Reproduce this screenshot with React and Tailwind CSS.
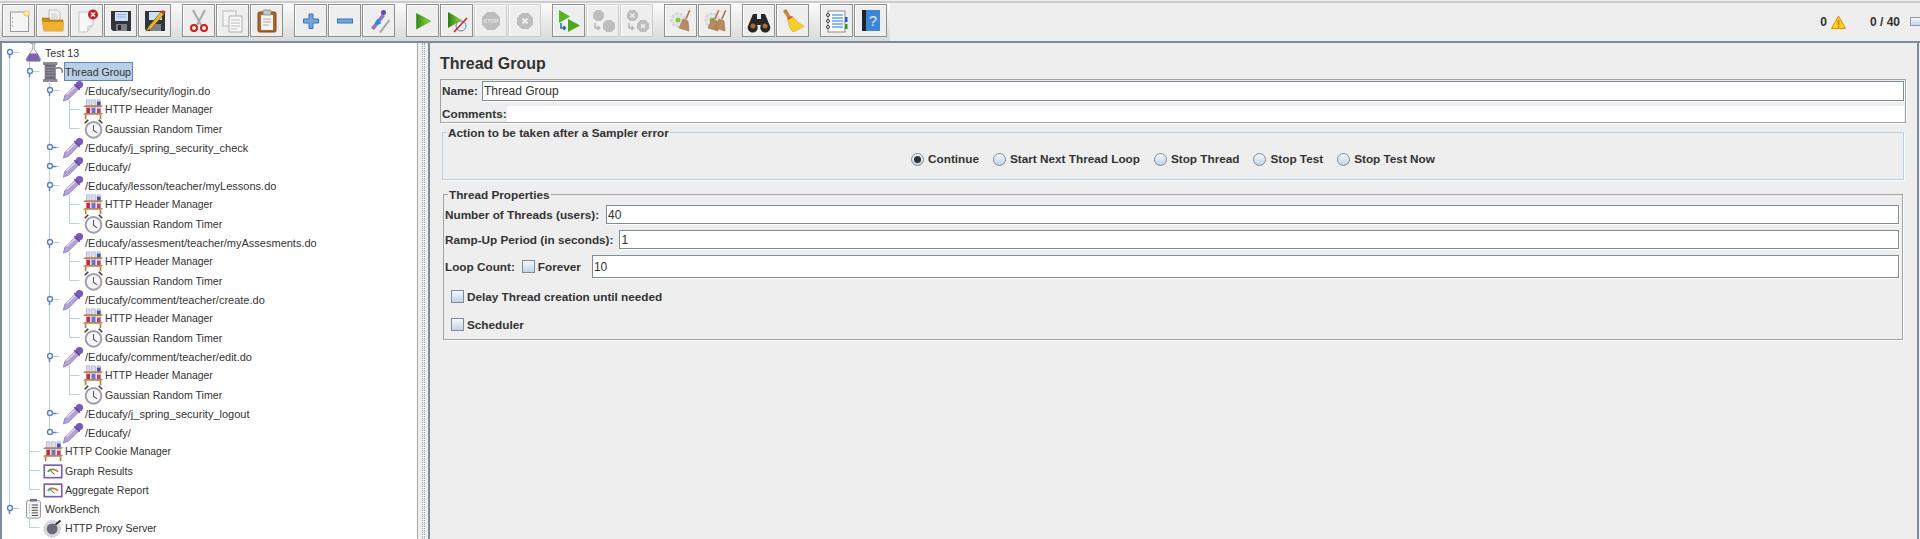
import React from "react";

// Toolbar icons, all drawn on a 24x24 box
const Svg = ({ size = 24, children, className = "" }) => (
  <svg width={size} height={size} viewBox="0 0 24 24" className={`shrink-0 ${className}`}>
    {children}
  </svg>
);

const NewIcon = () => (
  <Svg>
    <rect x="3.5" y="3" width="18" height="19.5" fill="#f5f5f5" stroke="#9a9a9a" />
    <circle cx="5.5" cy="9" r=".7" fill="#999" />
    <circle cx="5.5" cy="13" r=".7" fill="#999" />
    <circle cx="5.5" cy="17" r=".7" fill="#999" />
    <circle cx="19.5" cy="4.5" r="2.6" fill="#fff3b0" stroke="#e8c83a" />
  </Svg>
);
const OpenIcon = () => (
  <Svg>
    <path d="M8 1h8l3 3v10H8z" fill="#f4f4f4" stroke="#a0a0a0" strokeWidth=".7" />
    <path d="M10 5h6M10 7h7M10 9h7" stroke="#b5b5b5" strokeWidth=".7" />
    <path d="M1 9h7l1 2h13v11H3z" fill="#c98a1a" stroke="#a87412" strokeWidth=".6" />
    <path d="M1 13h22l-1 9H3z" fill="#f0b030" />
  </Svg>
);
const CloseIcon = () => (
  <Svg>
    <path d="M4 3h14v13l-6 7H4z" fill="#f7f7f7" stroke="#c4c4c4" />
    <path d="M12 23l1-6 5-1z" fill="#e2e2e2" stroke="#bbb" strokeWidth=".5" />
    <circle cx="18" cy="5.5" r="5" fill="#c91f1f" />
    <path d="M16 3.5l4 4M20 3.5l-4 4" stroke="#fff" strokeWidth="1.4" />
  </Svg>
);
const SaveIcon = () => (
  <Svg>
    <path d="M2 2h20v20H4l-2-2z" fill="#30343b" />
    <rect x="6" y="3" width="13" height="9" fill="#cfe0f4" />
    <path d="M8 5.5h9M8 8h9" stroke="#8fb2dc" />
    <rect x="7" y="15" width="11" height="7" fill="#7b8087" />
    <rect x="9" y="16" width="3" height="5" fill="#26292e" />
  </Svg>
);
const SaveAsIcon = () => (
  <Svg>
    <path d="M2 2h20v20H4l-2-2z" fill="#30343b" />
    <rect x="6" y="3" width="13" height="8" fill="#cfe0f4" />
    <rect x="7" y="15" width="11" height="7" fill="#7b8087" />
    <path d="M3 22l3-5L18 3l3 2L8 20z" fill="#e8b62a" stroke="#6b4b10" strokeWidth=".6" />
    <path d="M18 3l2-2 3 2-2 2z" fill="#d12f2f" />
  </Svg>
);
const CutIcon = () => (
  <Svg>
    <path d="M6 1l8 15M18 1l-8 15" stroke="#a8a8a8" strokeWidth="2" />
    <circle cx="7" cy="19" r="3" fill="none" stroke="#cf1d1d" strokeWidth="2" />
    <circle cx="17" cy="19" r="3" fill="none" stroke="#cf1d1d" strokeWidth="2" />
  </Svg>
);
const CopyIcon = () => (
  <Svg>
    <rect x="2" y="2" width="13" height="15" fill="#f4f4f4" stroke="#b9b9b9" />
    <path d="M8 7h13v16H8z" fill="#f8f8f8" stroke="#adadad" />
    <path d="M10 11h9M10 14h9M10 17h9M10 20h6" stroke="#bdbdbd" />
  </Svg>
);
const PasteIcon = () => (
  <Svg>
    <rect x="3" y="3" width="18" height="20" rx="1.5" fill="#a9682a" stroke="#7a4716" />
    <rect x="6" y="6" width="12" height="15" fill="#f4f4f4" />
    <rect x="8" y="1" width="8" height="5" rx="1" fill="#c5c5c5" stroke="#777" strokeWidth=".7" />
    <path d="M8 10h8M8 13h8M8 16h6" stroke="#aaa" />
  </Svg>
);
const PlusIcon = () => (
  <Svg>
    <path d="M10 5h4v5h5.500v4H14v5.500h-4V14H4.500v-4H10z" fill="#74a5dc" stroke="#3d72b3" />
  </Svg>
);
const MinusIcon = () => (
  <Svg>
    <rect x="4.500" y="10" width="15" height="4" fill="#74a5dc" stroke="#3d72b3" />
  </Svg>
);
const ToggleIcon = () => (
  <Svg>
    <path d="M4 19L15 5l3 2L7 21z" fill="#8f74c4" />
    <circle cx="16.500" cy="3.500" r="2.500" fill="#6b46b5" />
    <path d="M12 23l10-13 1 2-9 12z" fill="#a9a9a9" />
    <circle cx="11" cy="13" r="2.500" fill="#3c9ae0" />
    <path d="M8 14h6M11 10v6" stroke="#2a7fc4" />
  </Svg>
);
const RunIcon = () => (
  <Svg>
    <defs>
      <linearGradient id="runFill" x1="0" x2="1" y1="0" y2="0">
        <stop offset="0" stopColor="#2f8a14" />
        <stop offset="1" stopColor="#9fdc3c" />
      </linearGradient>
    </defs>
    <path d="M5.500 4.500L19.500 12 5.500 20z" fill="url(#runFill)" stroke="#3d8c1e" strokeWidth=".6" />
  </Svg>
);
const RunNoPauseIcon = () => (
  <Svg>
    <defs>
      <linearGradient id="runFill2" x1="0" x2="1" y1="0" y2="0">
        <stop offset="0" stopColor="#2f7a14" />
        <stop offset="1" stopColor="#9fdc3c" />
      </linearGradient>
    </defs>
    <path d="M3 3L17 11 3 19z" fill="url(#runFill2)" />
    <circle cx="16" cy="17" r="5" fill="#e8f0f8" stroke="#5d86b5" />
    <path d="M9 23L22 9" stroke="#e01818" strokeWidth="1.500" />
  </Svg>
);
const Octagon = ({ x = 2, y = 2, s = 20, fill = "#bdbdbd" }) => {
  const c = s * 0.29;
  return (
    <path
      d={`M${x + c} ${y}h${s - 2 * c}l${c} ${c}v${s - 2 * c}l${-c} ${c}h${-(s - 2 * c)}l${-c} ${-c}v${-(s - 2 * c)}z`}
      fill={fill}
    />
  );
};
const StopIcon = () => (
  <Svg>
    <Octagon x={3} y={3} s={18} />
    <text x="12" y="14" textAnchor="middle" fontSize="5.500" fontWeight="700" fill="#e6e6e6" fontFamily="Liberation Sans">
      STOP
    </text>
  </Svg>
);
const ShutdownIcon = () => (
  <Svg>
    <Octagon x={4} y={4} s={16} />
    <path d="M9.500 9.500l5 5M14.500 9.500l-5 5" stroke="#eee" strokeWidth="2.200" />
  </Svg>
);
const RemoteArrow = ({ color }) => (
  <path d="M4 14v5h4M6.500 17l2 2-2 2" fill="none" stroke={color} strokeWidth="1.500" />
);
const RemoteStartIcon = () => (
  <Svg>
    <path d="M2 1l11 6.500L2 14z" fill="#58b520" />
    <path d="M11 10l12 6.500L11 23z" fill="#4ba81b" />
    <RemoteArrow color="#1f6fa8" />
  </Svg>
);
const RemoteStopIcon = () => (
  <Svg>
    <Octagon x={2} y={1} s={11} />
    <Octagon x={12} y={11} s={12} />
    <RemoteArrow color="#b5b5b5" />
  </Svg>
);
const RemoteShutdownIcon = () => (
  <Svg>
    <Octagon x={2} y={1} s={11} />
    <Octagon x={12} y={11} s={12} />
    <path d="M5.500 4.500l4 4M9.500 4.500l-4 4M16 15l4 4M20 15l-4 4" stroke="#eee" strokeWidth="1.500" />
    <RemoteArrow color="#b5b5b5" />
  </Svg>
);
const Gear = () => (
  <>
    <circle cx="9" cy="11" r="6.500" fill="#e6e6e6" stroke="#d2d2d2" strokeWidth="2" strokeDasharray="3 1.500" />
    <circle cx="9" cy="11" r="2.500" fill="#88c63c" />
  </>
);
const Broom = ({ dx = 0 }) => (
  <g transform={`translate(${dx} 0)`}>
    <path d="M20 1l1.500.500-4 9-1.500-.500z" fill="#a9744a" />
    <path d="M14 10l5 2 1 10-10-3z" fill="#b98a5f" stroke="#8f6238" strokeWidth=".5" />
  </g>
);
const ClearIcon = () => (
  <Svg>
    <Gear />
    <Broom />
  </Svg>
);
const ClearAllIcon = () => (
  <Svg>
    <Gear />
    <Broom dx={-5} />
    <Broom dx={2} />
  </Svg>
);
const FindIcon = () => (
  <Svg>
    <path d="M6 5h4v5h4V5h4l5 12a5 5 0 1 1-9-1h-4a5 5 0 1 1-9 1z" fill="#23262a" />
    <circle cx="6" cy="17" r="2.500" fill="#b5671f" />
    <circle cx="18" cy="17" r="2.500" fill="#b5671f" />
  </Svg>
);
const BroomIcon = () => (
  <Svg>
    <path d="M3 1c2-1 4 0 4 2l3 5-3 2-3-5C2 4 2 2 3 1z" fill="#c08a3a" />
    <path d="M6 10l5-3 1 1-5 3z" fill="#d62a1f" />
    <path d="M7 11l5-3c3 4 7 7 11 9-4 3-9 5-11 6-3-3-5-8-5-12z" fill="#f4cf2c" stroke="#d6a81b" strokeWidth=".6" />
  </Svg>
);
const FunctionIcon = () => (
  <Svg>
    <rect x="3" y="2" width="17" height="21" fill="#fafafa" stroke="#8a8a8a" />
    <circle cx="3" cy="6" r="1.500" fill="#fff" stroke="#333" />
    <circle cx="3" cy="12" r="1.500" fill="#fff" stroke="#333" />
    <circle cx="3" cy="18" r="1.500" fill="#fff" stroke="#333" />
    <path d="M7 6h11M7 9h11M7 12h11M7 15h11M7 18h11" stroke="#1e7fe0" />
    <rect x="20" y="8" width="2.500" height="5" fill="#1e62b8" />
    <rect x="20" y="15" width="2.500" height="5" fill="#2d9a2d" />
  </Svg>
);
const HelpIcon = () => (
  <Svg>
    <rect x="4" y="1" width="17" height="21" fill="#3e86d4" />
    <rect x="3" y="1" width="4" height="21" fill="#1b2530" />
    <text x="14" y="17" textAnchor="middle" fontSize="15" fill="#dcebfb" fontFamily="Liberation Sans">
      ?
    </text>
  </Svg>
);

// Tree icons
const FlaskIcon = () => (
  <Svg size={21}>
    <path d="M9 1h5v1h-1v6l7 11c1 2 0 3-2 3H6c-2 0-3-1-2-3l7-11V2H9z" fill="#efeff3" stroke="#8b8b98" strokeWidth=".8" />
    <path d="M7.500 13h9l3 6c.5 2-.5 3-2 3H6c-1.500 0-2.500-1-2-3z" fill="#7d62ae" />
  </Svg>
);
const SpoolIcon = () => (
  <Svg size={22}>
    <rect x="1" y="1" width="16" height="3.500" rx="1" fill="#8d8a93" />
    <rect x="1" y="19.500" width="16" height="3.500" rx="1" fill="#8d8a93" />
    <rect x="3" y="4" width="12" height="16" fill="#6f6b78" />
    <path d="M3 7h12M3 10h12M3 13h12M3 16h12" stroke="#9a96a3" />
    <path d="M15 8c5-2 8 1 7 5" fill="none" stroke="#77747f" strokeWidth="1.500" />
  </Svg>
);
const DropperIcon = () => (
  <Svg size={22}>
    <path d="M1.500 23L3 17 14 6l4 4L7 21z" fill="#b5a3d8" stroke="#8472ab" strokeWidth=".8" />
    <path d="M5 16L14 7.500" stroke="#eae4f5" strokeWidth="1.200" />
    <circle cx="19" cy="5" r="4" fill="#7a5ab8" />
    <path d="M13.500 4.500l6 6" stroke="#674aa0" strokeWidth="1.800" />
  </Svg>
);
const RackIcon = () => (
  <Svg size={21}>
    <rect x="4" y="1" width="4" height="16" fill="#dcd9ef" stroke="#8a88b8" strokeWidth=".5" />
    <rect x="10" y="1" width="4" height="16" fill="#dcd9ef" stroke="#8a88b8" strokeWidth=".5" />
    <rect x="16" y="1" width="4" height="16" fill="#dcd9ef" stroke="#8a88b8" strokeWidth=".5" />
    <rect x="4" y="10" width="4" height="6" fill="#c8284a" />
    <rect x="10" y="10" width="4" height="6" fill="#6a72cf" />
    <rect x="16" y="3" width="4" height="5" fill="#3c4fc4" />
    <rect x="16" y="11" width="4" height="5" fill="#c8406a" />
    <path d="M2 7h21l-2 2H0zM2 16h21l-2 2H0z" fill="#bb8548" />
    <path d="M3 18v5M20 18v5" stroke="#bb8548" strokeWidth="2" />
  </Svg>
);
const TimerIcon = () => (
  <Svg size={21}>
    <circle cx="12" cy="13.500" r="9" fill="#f7f7f9" stroke="#a09cab" strokeWidth="2.200" />
    <path d="M12 8v6l4 3" fill="none" stroke="#555" strokeWidth="1.200" />
    <path d="M2 6l4-4M22 6l-4-4" stroke="#444" strokeWidth="2" />
  </Svg>
);
const GraphIcon = () => (
  <Svg size={20}>
    <rect x="1.500" y="5" width="21" height="15" fill="#fff" stroke="#7a5fb0" strokeWidth="2" />
    <path d="M6 13c2-4 9-4 12 0" fill="none" stroke="#e2683a" strokeWidth="2" />
    <path d="M6 13c1-2 3-3 5-3" fill="none" stroke="#4caf5a" strokeWidth="2" />
    <path d="M9 12l5 4" stroke="#444" />
  </Svg>
);
const BenchIcon = () => (
  <Svg size={21}>
    <rect x="4" y="3" width="16" height="20" rx="2" fill="#f3f3f6" stroke="#8c8a95" />
    <rect x="8" y="1" width="8" height="3" fill="#77747f" />
    <path d="M10 8h7M10 11h7M10 14h7M10 17h7M10 20h7" stroke="#333" />
    <path d="M7 8h1M7 11h1M7 14h1M7 17h1" stroke="#55a04a" />
  </Svg>
);
const ProxyIcon = () => (
  <Svg size={20}>
    <circle cx="11" cy="13" r="10" fill="#d9d8df" stroke="#b1afba" strokeDasharray="2 2" />
    <circle cx="11" cy="13" r="6.500" fill="#6b6876" />
    <path d="M15 8l6-5" stroke="#222" strokeWidth="2" />
  </Svg>
);

const toolbarGroups = [
  [<NewIcon />, <OpenIcon />, <CloseIcon />, <SaveIcon />, <SaveAsIcon />],
  [<CutIcon />, <CopyIcon />, <PasteIcon />],
  [<PlusIcon />, <MinusIcon />, <ToggleIcon />],
  [<RunIcon />, <RunNoPauseIcon />, { icon: <StopIcon />, off: true }, { icon: <ShutdownIcon />, off: true }],
  [<RemoteStartIcon />, { icon: <RemoteStopIcon />, off: true }, { icon: <RemoteShutdownIcon />, off: true }],
  [<ClearIcon />, <ClearAllIcon />],
  [<FindIcon />, <BroomIcon />],
  [<FunctionIcon />, <HelpIcon />],
];

const iconFor = {
  flask: <FlaskIcon />,
  spool: <SpoolIcon />,
  dropper: <DropperIcon />,
  rack: <RackIcon />,
  timer: <TimerIcon />,
  graph: <GraphIcon />,
  bench: <BenchIcon />,
  proxy: <ProxyIcon />,
};

const labelSize = {
  dropper: "text-[11px]",
  rack: "text-[10.4px]",
};

// depth, label, icon, state ("open", "closed" or nothing for a leaf)
const rows = [
  [0, "Test 13", "flask", "open"],
  [1, "Thread Group", "spool", "open"],
  [2, "/Educafy/security/login.do", "dropper", "open"],
  [3, "HTTP Header Manager", "rack"],
  [3, "Gaussian Random Timer", "timer"],
  [2, "/Educafy/j_spring_security_check", "dropper", "closed"],
  [2, "/Educafy/", "dropper", "closed"],
  [2, "/Educafy/lesson/teacher/myLessons.do", "dropper", "open"],
  [3, "HTTP Header Manager", "rack"],
  [3, "Gaussian Random Timer", "timer"],
  [2, "/Educafy/assesment/teacher/myAssesments.do", "dropper", "open"],
  [3, "HTTP Header Manager", "rack"],
  [3, "Gaussian Random Timer", "timer"],
  [2, "/Educafy/comment/teacher/create.do", "dropper", "open"],
  [3, "HTTP Header Manager", "rack"],
  [3, "Gaussian Random Timer", "timer"],
  [2, "/Educafy/comment/teacher/edit.do", "dropper", "open"],
  [3, "HTTP Header Manager", "rack"],
  [3, "Gaussian Random Timer", "timer"],
  [2, "/Educafy/j_spring_security_logout", "dropper", "closed"],
  [2, "/Educafy/", "dropper", "closed"],
  [1, "HTTP Cookie Manager", "rack"],
  [1, "Graph Results", "graph"],
  [1, "Aggregate Report", "graph"],
  [0, "WorkBench", "bench", "open"],
  [1, "HTTP Proxy Server", "proxy"],
];

// true when a later row at this depth still belongs to the same parent
const continues = (index, depth) => {
  for (let i = index + 1; i < rows.length; i++) {
    if (rows[i][0] < depth) return false;
    if (rows[i][0] === depth) return true;
  }
  return false;
};

function TreeGuides({ index, depth, state }) {
  const width = 21 + depth * 20;
  const x = 7.5 + depth * 20;
  const lines = [];
  for (let d = 0; d < depth; d++) {
    if (continues(index, d)) lines.push(`M${7.5 + d * 20} 0V19`);
  }
  lines.push(`M${x} ${index === 0 ? 9 : 0}V${continues(index, depth) ? 19 : 9.5}`);
  lines.push(`M${x} 9.500H${x + 10}`);
  return (
    <svg width={width} height={19} className="shrink-0">
      <path d={lines.join("")} fill="none" stroke="#b8cfe5" />
      {state && (
        <>
          <path
            d={state === "open" ? `M${x} 9V15` : `M${x} 9.500H${x + 7}`}
            fill="none"
            stroke="#5f83c2"
            strokeWidth="1.500"
          />
          <circle cx={x + 0.5} cy={9} r={2.500} fill="#fff" stroke="#5f83c2" strokeWidth="1.400" />
        </>
      )}
    </svg>
  );
}

function ToolButton({ item }) {
  const off = item.off === true;
  return (
    <div
      className={`w-[33px] h-[33px] flex items-center justify-center border bg-[#eeeeee] shadow-[inset_1px_1px_0_#ffffff] ${
        off ? "border-[#cdcdcd]" : "border-[#8f8f8f]"
      }`}
    >
      {off ? item.icon : item}
    </div>
  );
}

function Toolbar() {
  return (
    <div className="h-[43px] shrink-0 flex border-b-2 border-[#7d8b9b]">
      <div className="w-[890px] shrink-0 pl-[2px] pt-[1px] flex gap-[11px] border-t-2 border-[#cccccc] mt-[1px] bg-linear-to-b from-[#fbfbfb] to-[#dadada]">
        {toolbarGroups.map((group, i) => (
          <div key={i} className="flex gap-[1px] h-[33px]">
            {group.map((item, j) => (
              <ToolButton key={j} item={item} />
            ))}
          </div>
        ))}
      </div>
      <div className="flex-1 min-w-0 border-t-2 border-[#cccccc] mt-[1px] flex items-center justify-end overflow-hidden font-bold text-[12px] -mr-[3px] pb-[1px]">
        <span>0</span>
        <svg width="15" height="14" viewBox="0 0 15 14" className="ml-[4px] mr-[24px]">
          <path d="M7.500 1L14.500 13.500H.5z" fill="#fdd90f" stroke="#e8801a" />
          <path d="M7.500 5v5M7.500 11v1.500" stroke="#d8641a" strokeWidth="1.500" />
        </svg>
        <span>0 / 40</span>
        <div className="w-[13px] h-[9px] ml-[10px] border border-[#8d9aa8] bg-linear-to-b from-[#f6f8fb] to-[#c3d3e5]"></div>
      </div>
    </div>
  );
}

function TreeRow({ index, row }) {
  const [depth, label, icon, state] = row;
  const selected = index === 1;
  return (
    <div className={`h-[19px] flex items-center whitespace-nowrap ${labelSize[icon] || "text-[10.6px]"}`}>
      <TreeGuides index={index} depth={depth} state={state} />
      <div className="w-[20px] h-[19px] flex items-center justify-center shrink-0">{iconFor[icon]}</div>
      <span
        className={`ml-[1px] h-[19px] leading-[18px] pr-[1px] border ${
          selected ? "bg-[#b8cfe5] border-[#6382bf]" : "border-transparent"
        }`}
      >
        {label}
      </span>
    </div>
  );
}

function Checkbox() {
  return <div className="w-[13px] h-[13px] shrink-0 border border-[#7d8b9b] bg-linear-to-b from-[#f6f8fb] to-[#c3d3e5]"></div>;
}

function Radio({ label, checked }) {
  return (
    <div className="flex items-center gap-[4px]">
      <div className="w-[13px] h-[13px] rounded-full border border-[#7d8b9b] bg-linear-to-b from-[#f6f8fb] to-[#c3d3e5] flex items-center justify-center">
        {checked && <div className="w-[7px] h-[7px] rounded-full bg-[#333333]"></div>}
      </div>
      <span>{label}</span>
    </div>
  );
}

function TextBox({ value, className = "h-[19px]" }) {
  return (
    <div className={`flex-1 min-w-0 border border-[#7d8b9b] bg-white shadow-[1px_1px_0_#ffffff] pl-[1px] flex items-center font-normal text-[12px] ${className}`}>
      {value}
    </div>
  );
}

function Legend({ children }) {
  return <span className="absolute -top-[9px] left-[4px] px-[1px] bg-[#eeeeee] leading-[17px]">{children}</span>;
}

function ThreadGroupPanel() {
  return (
    <div className="flex-1 min-w-0 border-l-2 border-r-2 border-[#7d8b9b] mr-[1px] pl-[10px] pr-[11px] text-[11.75px] font-bold">
      <div className="h-[20px] mt-[11px] text-[16px] leading-[20px]">Thread Group</div>

      <div className="mt-[5px] h-[44px] border border-[#a3a3a3] shadow-[1px_1px_0_#ffffff] pt-[1px] pr-[1px]">
        <div className="flex items-center h-[20px] pl-[1px] gap-[4px]">
          <span>Name:</span>
          <TextBox value="Thread Group" className="h-[20px]" />
        </div>
        <div className="flex items-center h-[16px] mt-[5px] pl-[1px]">
          <span>Comments:</span>
          <div className="flex-1 h-full bg-white"></div>
        </div>
      </div>

      <div className="relative mt-[9px] mx-[2px] h-[48px] border border-[#b8cfe5] shadow-[1px_1px_0_#ffffff] flex items-center justify-center gap-[14px] pt-[6px]">
        <Legend>Action to be taken after a Sampler error</Legend>
        <Radio label="Continue" checked />
        <Radio label="Start Next Thread Loop" />
        <Radio label="Stop Thread" />
        <Radio label="Stop Test" />
        <Radio label="Stop Test Now" />
      </div>

      <div className="relative mt-[14px] mx-[3px] h-[146px] border border-[#a3a3a3] shadow-[1px_1px_0_#ffffff] pt-[10px] pl-[1px] pr-[3px]">
        <Legend>Thread Properties</Legend>
        <div className="flex items-center gap-[7px]">
          <span>Number of Threads (users):</span>
          <TextBox value="40" />
        </div>
        <div className="flex items-center gap-[6px] mt-[6px]">
          <span>Ramp-Up Period (in seconds):</span>
          <TextBox value="1" />
        </div>
        <div className="flex items-center mt-[6px]">
          <span>Loop Count:</span>
          <div className="ml-[7px]">
            <Checkbox />
          </div>
          <span className="ml-[3px] mr-[11px]">Forever</span>
          <TextBox value="10" className="h-[23px]" />
        </div>
        <div className="flex items-center gap-[3px] h-[17px] mt-[10px] pl-[6px]">
          <Checkbox />
          <span>Delay Thread creation until needed</span>
        </div>
        <div className="flex items-center gap-[3px] h-[17px] mt-[11px] pl-[6px]">
          <Checkbox />
          <span>Scheduler</span>
        </div>
      </div>
    </div>
  );
}

export default function App() {
  return (
    <div className="h-[539px] overflow-hidden flex flex-col bg-[#eeeeee] text-[#333333] font-['Liberation_Sans',Arial,sans-serif]">
      <Toolbar />
      <div className="flex-1 min-h-0 flex">
        <div className="w-[418px] shrink-0 bg-white border-l-2 border-r border-l-[#7d8b9b] border-r-[#a8a8a8] overflow-hidden">
          {rows.map((row, i) => (
            <TreeRow key={i} index={i} row={row} />
          ))}
        </div>
        <div className="w-[10px] shrink-0 flex justify-center">
          <div className="w-[3px] border-x border-dotted border-[#a0a0a0]"></div>
        </div>
        <ThreadGroupPanel />
      </div>
    </div>
  );
}
